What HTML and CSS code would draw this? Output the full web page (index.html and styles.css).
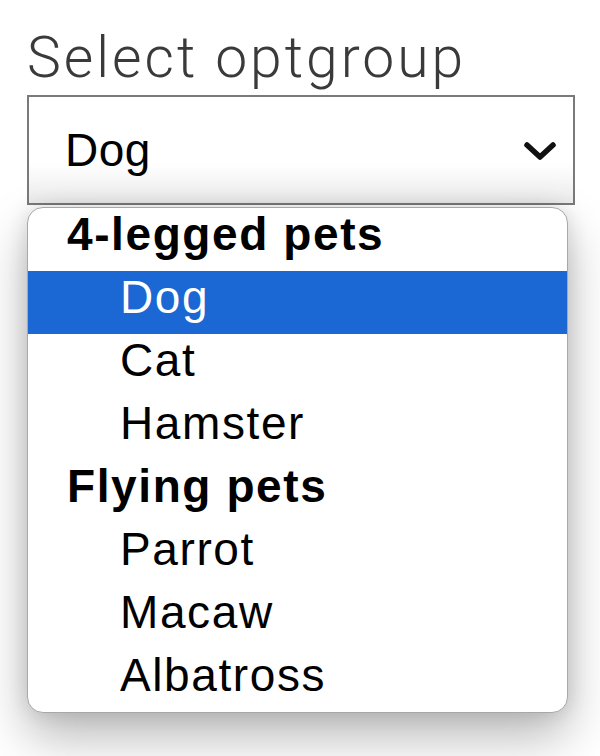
FILE: index.html
```html
<!DOCTYPE html>
<html lang="en">
<head>
<meta charset="utf-8">
<title>Select optgroup</title>
<link rel="stylesheet" href="styles.css">
</head>
<body>
<div class="field">
  <label class="label">Select optgroup</label>
  <div class="select">
    <span class="select-value">Dog</span>
    <svg class="chevron" width="34" height="22" viewBox="0 0 34 22" aria-hidden="true">
      <polyline points="4,5 17,17 30,5" fill="none" stroke="#111" stroke-width="5.5" stroke-linecap="round" stroke-linejoin="round"/>
    </svg>
  </div>
  <div class="dropdown">
    <div class="group">4-legged pets</div>
    <div class="option selected">Dog</div>
    <div class="option">Cat</div>
    <div class="option">Hamster</div>
    <div class="group">Flying pets</div>
    <div class="option">Parrot</div>
    <div class="option">Macaw</div>
    <div class="option">Albatross</div>
  </div>
</div>
</body>
</html>
```

FILE: styles.css
```css
html, body {
  margin: 0;
  padding: 0;
  background: #ffffff;
}

body {
  min-height: 756px;
}

.field {
  box-sizing: border-box;
  min-height: 756px;
  padding: 28px 0 0 27px;
  display: flex;
  flex-direction: column;
  align-items: flex-start;
}

.label {
  font-family: Roboto, "Noto Sans", sans-serif;
  font-weight: 300;
  font-size: 57px;
  line-height: 60px;
  letter-spacing: 3px;
  color: #3a3a3a;
  margin-bottom: 7px;
}

.select {
  box-sizing: border-box;
  width: 548px;
  height: 110px;
  border: 2px solid #7a7a7a;
  background: linear-gradient(#ffffff 0%, #ffffff 62%, #ececec 100%);
  display: flex;
  align-items: center;
  justify-content: space-between;
  padding: 0 16px 0 36px;
  font-family: "Liberation Sans", Arial, sans-serif;
  font-size: 46px;
  line-height: 46px;
  letter-spacing: 0.5px;
  color: #000000;
}

.chevron {
  display: block;
  margin-top: 2px;
}

.dropdown {
  box-sizing: border-box;
  margin-top: 2px;
  width: 541px;
  background: #ffffff;
  border: 1px solid #a8a8a8;
  border-radius: 16px;
  overflow: hidden;
  box-shadow: 0 24px 50px rgba(0, 0, 0, 0.28), 0 0 20px rgba(0, 0, 0, 0.12);
  font-family: "Liberation Sans", Arial, sans-serif;
  font-size: 46px;
  letter-spacing: 1.6px;
  color: #000000;
}

.group,
.option {
  height: 63px;
  line-height: 53px;
  white-space: nowrap;
}

.group {
  font-weight: 700;
  padding-left: 39px;
}

.option {
  padding-left: 92px;
}

.option.selected {
  background: #1b67d3;
  color: #ffffff;
}
```
